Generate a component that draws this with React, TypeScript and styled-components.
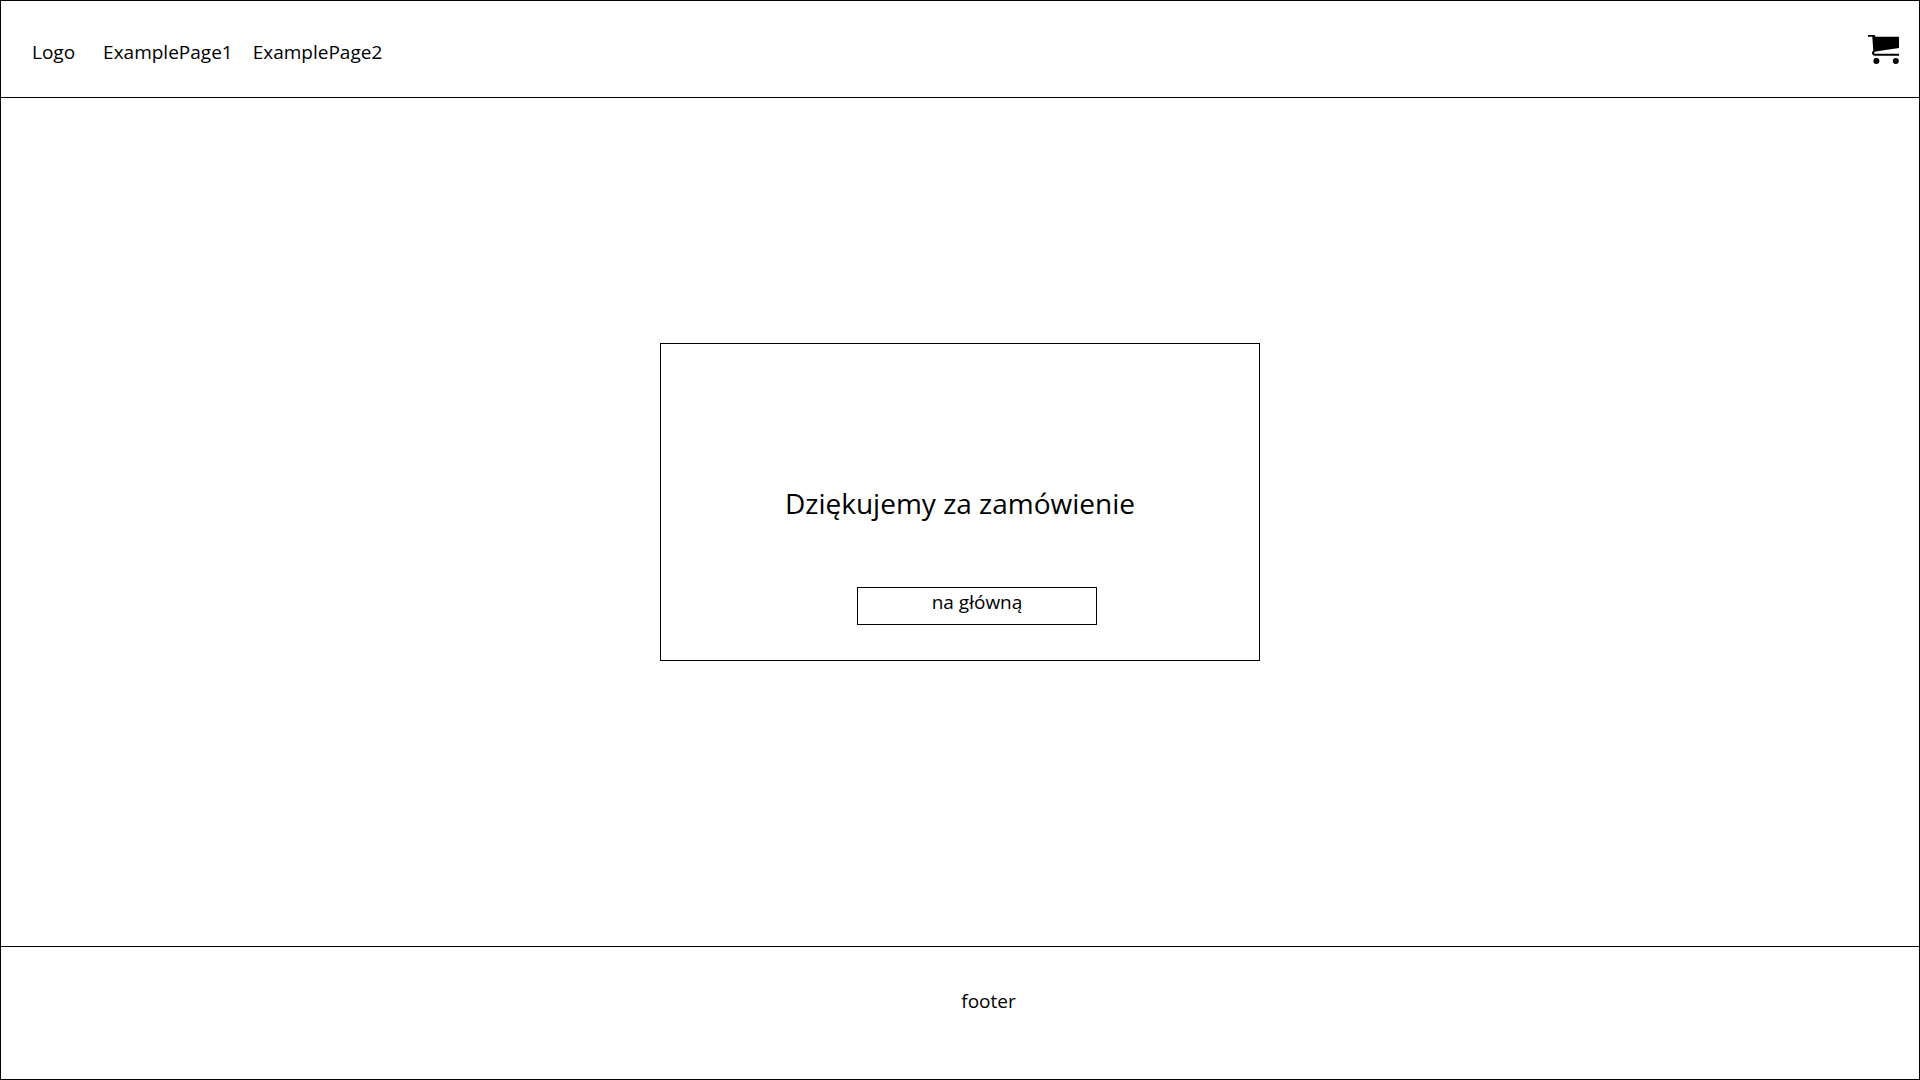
import React from "react";
import styled, { createGlobalStyle } from "styled-components";

const GlobalStyle = createGlobalStyle`
  *, *::before, *::after {
    box-sizing: border-box;
  }

  body {
    margin: 0;
    background: #fff;
    color: #000;
    font-family: "Segoe UI", "Open Sans", "Noto Sans", sans-serif;
    font-size: 19px;
    line-height: 28px;
  }
`;

const Page = styled.div`
  display: flex;
  flex-direction: column;
  min-height: 100vh;
  border: 1px solid #000;
`;

const Header = styled.header`
  display: flex;
  align-items: flex-start;
  justify-content: space-between;
  padding: 34px 19px 31px;
  border-bottom: 1px solid #000;
`;

const Nav = styled.nav`
  display: flex;
  gap: 20px;
  padding: 3px 12px 0;
`;

const NavLink = styled.a`
  color: inherit;
  text-decoration: none;
`;

const LogoLink = styled(NavLink)`
  margin-right: 8px;
`;

const CartButton = styled.button`
  display: flex;
  padding: 0;
  border: 0;
  background: none;
  color: inherit;
  cursor: pointer;
`;

const Main = styled.main`
  display: flex;
  flex: 1;
  align-items: center;
  justify-content: center;
  padding-bottom: 40px;
`;

const Card = styled.section`
  display: flex;
  flex-direction: column;
  align-items: center;
  gap: 64px;
  width: 100%;
  max-width: 600px;
  padding: 139px 0 35px;
  border: 1px solid #000;
`;

const Title = styled.h1`
  margin: 0;
  font-size: 28px;
  font-weight: 400;
  line-height: 40px;
`;

const HomeButton = styled.button`
  width: 240px;
  height: 38px;
  margin-left: 34px;
  padding: 0 0 8px;
  border: 1px solid #000;
  background: #fff;
  color: inherit;
  font: inherit;
  cursor: pointer;
`;

const Footer = styled.footer`
  padding: 40px 0 64px 57px;
  border-top: 1px solid #000;
  text-align: center;
`;

const CartIcon = () => (
  <svg width="32" height="30" viewBox="0 0 32 30" aria-hidden="true">
    <path
      d="M0 0H6Q7.5 .3 7.5 1.8H31V13L7.500 16.500Q5.500 17 6.200 18.300Q6.500 18.800 7.500 18.800H31V20.800H7Q4 20.500 4 17.800Q4.200 16.500 5.300 15.800L4.300 1.800H0Z"
      fill="currentColor"
    />
    <circle cx="8.400" cy="26" r="3" fill="currentColor" />
    <circle cx="27.800" cy="26" r="3" fill="currentColor" />
  </svg>
);

export default function App() {
  return (
    <>
      <GlobalStyle />
      <Page>
        <Header>
          <Nav>
            <LogoLink href="#">Logo</LogoLink>
            <NavLink href="#page1">ExamplePage1</NavLink>
            <NavLink href="#page2">ExamplePage2</NavLink>
          </Nav>
          <CartButton type="button" aria-label="Koszyk">
            <CartIcon />
          </CartButton>
        </Header>
        <Main>
          <Card>
            <Title>Dziękujemy za zamówienie</Title>
            <HomeButton type="button">na główną</HomeButton>
          </Card>
        </Main>
        <Footer>footer</Footer>
      </Page>
    </>
  );
}
